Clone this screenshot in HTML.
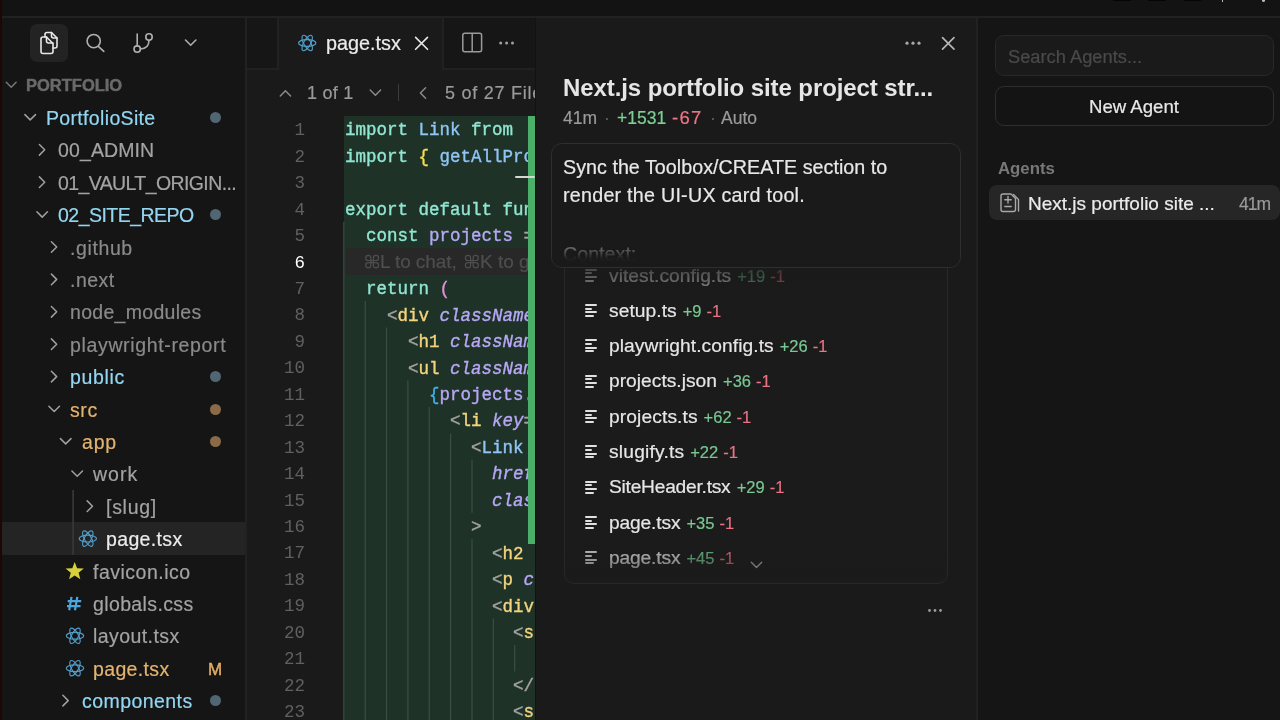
<!DOCTYPE html>
<html><head><meta charset="utf-8"><style>
*{margin:0;padding:0;box-sizing:border-box}
html,body{width:1280px;height:720px;overflow:hidden;background:#181818;font-family:"Liberation Sans",sans-serif}
.a{position:absolute}
.t{position:absolute;white-space:nowrap;line-height:1;will-change:transform;padding:6px 0;margin-top:-6px;-webkit-text-stroke:0.2px currentColor}
.m{font-family:"Liberation Mono",monospace;-webkit-text-stroke:0.35px currentColor}
svg.ov{position:absolute;left:0;top:0;overflow:visible}
</style></head><body>
<div class="a" style="left:0;top:0;width:1280px;height:16px;background:#131313"></div>
<div class="a" style="left:0;top:16px;width:1280px;height:2px;background:#212121"></div>
<div class="a" style="left:0;top:18px;width:245px;height:702px;background:#151515"></div>
<div class="a" style="left:0;top:0;width:2px;height:720px;background:#1c0606"></div>
<div class="a" style="left:1113px;top:0;width:18px;height:1px;background:#050505"></div>
<div class="a" style="left:1148px;top:0;width:18px;height:1px;background:#050505"></div>
<div class="a" style="left:1184px;top:0;width:17px;height:1px;background:#050505"></div>
<div class="a" style="left:1221.5px;top:0;width:1.5px;height:1.5px;background:#bbb"></div>
<div class="a" style="left:1262px;top:0;width:2.5px;height:1.5px;border-radius:0 0 2px 2px;background:#bbb"></div>
<div class="a" style="left:30px;top:24px;width:38px;height:38px;border-radius:7px;background:#232323"></div>
<div class="t" style="-webkit-text-stroke:0;left:25.5px;top:77.03px;font-size:16.5px;color:#6a6a6a;font-weight:700;letter-spacing:-0.006px;-webkit-text-stroke:0.45px currentColor;">PORTFOLIO</div>
<div class="a" style="left:2px;top:522.4px;width:243px;height:32.4px;background:#242424"></div>
<div class="t" style="left:46px;top:108.99px;font-size:19.5px;color:#93d6f2;font-weight:400;letter-spacing:0.338px;">PortfolioSite</div>
<div class="a" style="left:209.5px;top:111.9px;width:11px;height:11px;border-radius:50%;background:#506773"></div>
<div class="t" style="left:58px;top:141.39px;font-size:19.5px;color:#a3a3a3;font-weight:400;letter-spacing:0.118px;">00_ADMIN</div>
<div class="t" style="left:58px;top:173.79px;font-size:19.5px;color:#a3a3a3;font-weight:400;letter-spacing:-0.602px;">01_VAULT_ORIGIN...</div>
<div class="t" style="left:58px;top:206.19px;font-size:19.5px;color:#93d6f2;font-weight:400;letter-spacing:-0.526px;">02_SITE_REPO</div>
<div class="a" style="left:209.5px;top:209.1px;width:11px;height:11px;border-radius:50%;background:#506773"></div>
<div class="t" style="left:70px;top:238.59px;font-size:19.5px;color:#8a8a8a;font-weight:400;letter-spacing:0.606px;">.github</div>
<div class="t" style="left:70px;top:270.99px;font-size:19.5px;color:#8a8a8a;font-weight:400;letter-spacing:0.480px;">.next</div>
<div class="t" style="left:70px;top:303.39px;font-size:19.5px;color:#8a8a8a;font-weight:400;letter-spacing:0.297px;">node_modules</div>
<div class="t" style="left:70px;top:335.79px;font-size:19.5px;color:#8a8a8a;font-weight:400;letter-spacing:0.654px;">playwright-report</div>
<div class="t" style="left:70px;top:368.19px;font-size:19.5px;color:#93d6f2;font-weight:400;letter-spacing:0.649px;">public</div>
<div class="a" style="left:209.5px;top:371.1px;width:11px;height:11px;border-radius:50%;background:#506773"></div>
<div class="t" style="left:70px;top:400.59px;font-size:19.5px;color:#e3b46e;font-weight:400;letter-spacing:0.600px;">src</div>
<div class="a" style="left:209.5px;top:403.5px;width:11px;height:11px;border-radius:50%;background:#8b6b47"></div>
<div class="t" style="left:81.5px;top:432.99px;font-size:19.5px;color:#e3b46e;font-weight:400;letter-spacing:0.827px;">app</div>
<div class="a" style="left:209.5px;top:435.9px;width:11px;height:11px;border-radius:50%;background:#8b6b47"></div>
<div class="t" style="left:93px;top:465.39px;font-size:19.5px;color:#a3a3a3;font-weight:400;letter-spacing:1.009px;">work</div>
<div class="t" style="left:105.8px;top:497.79px;font-size:19.5px;color:#a3a3a3;font-weight:400;letter-spacing:0.718px;">[slug]</div>
<div class="t" style="left:105.8px;top:530.19px;font-size:19.5px;color:#ececec;font-weight:400;letter-spacing:0.354px;">page.tsx</div>
<div class="t" style="left:93px;top:562.59px;font-size:19.5px;color:#a3a3a3;font-weight:400;letter-spacing:0.506px;">favicon.ico</div>
<div class="t" style="left:93px;top:594.99px;font-size:19.5px;color:#a3a3a3;font-weight:400;letter-spacing:0.373px;">globals.css</div>
<div class="t" style="left:93px;top:627.39px;font-size:19.5px;color:#a3a3a3;font-weight:400;letter-spacing:0.425px;">layout.tsx</div>
<div class="t" style="left:93px;top:659.79px;font-size:19.5px;color:#e3b46e;font-weight:400;letter-spacing:0.354px;">page.tsx</div>
<div class="t" style="left:207.6px;top:660.81px;font-size:17px;color:#e4ad64;font-weight:400;-webkit-text-stroke:0.45px currentColor;">M</div>
<div class="t" style="left:81.5px;top:692.19px;font-size:19.5px;color:#93d6f2;font-weight:400;letter-spacing:0.441px;">components</div>
<div class="a" style="left:209.5px;top:695.1px;width:11px;height:11px;border-radius:50%;background:#506773"></div>
<div class="a" style="left:246px;top:18px;width:289px;height:702px;background:#1a1a1a"></div>
<div class="a" style="left:245px;top:18px;width:2px;height:702px;background:#212121"></div>
<div class="a" style="left:247px;top:18px;width:32px;height:51.5px;background:#161616;border-right:2px solid #212121;border-bottom:2px solid #212121"></div>
<div class="a" style="left:442px;top:18px;width:93px;height:51.5px;background:#161616;border-left:2px solid #212121;border-bottom:2px solid #212121"></div>
<div class="t" style="left:325.5px;top:33.54px;font-size:19.8px;color:#ececec;font-weight:400;">page.tsx</div>
<div class="t" style="left:306.5px;top:84.06px;font-size:18px;color:#9a9a9a;font-weight:400;letter-spacing:0.231px;">1 of 1</div>
<div class="a" style="left:398.2px;top:84px;width:1.2px;height:17px;background:#3c3c3c"></div>
<div class="a" style="left:246px;top:69px;width:289px;height:47px;overflow:hidden">
<div class="t" style="left:198.5px;top:15.06px;font-size:18px;color:#9a9a9a;font-weight:400;letter-spacing:0.75px;">5 of 27 Files</div>
</div>
<div class="t m" style="-webkit-text-stroke:0;left:255px;width:50px;text-align:right;top:122.27px;font-size:17.5px;line-height:17.5px;color:#606060">1</div>
<div class="t m" style="-webkit-text-stroke:0;left:255px;width:50px;text-align:right;top:148.72px;font-size:17.5px;line-height:17.5px;color:#606060">2</div>
<div class="t m" style="-webkit-text-stroke:0;left:255px;width:50px;text-align:right;top:175.18px;font-size:17.5px;line-height:17.5px;color:#606060">3</div>
<div class="t m" style="-webkit-text-stroke:0;left:255px;width:50px;text-align:right;top:201.62px;font-size:17.5px;line-height:17.5px;color:#606060">4</div>
<div class="t m" style="-webkit-text-stroke:0;left:255px;width:50px;text-align:right;top:228.08px;font-size:17.5px;line-height:17.5px;color:#606060">5</div>
<div class="t m" style="-webkit-text-stroke:0;left:255px;width:50px;text-align:right;top:254.53px;font-size:17.5px;line-height:17.5px;color:#ffffff">6</div>
<div class="t m" style="-webkit-text-stroke:0;left:255px;width:50px;text-align:right;top:280.98px;font-size:17.5px;line-height:17.5px;color:#606060">7</div>
<div class="t m" style="-webkit-text-stroke:0;left:255px;width:50px;text-align:right;top:307.43px;font-size:17.5px;line-height:17.5px;color:#606060">8</div>
<div class="t m" style="-webkit-text-stroke:0;left:255px;width:50px;text-align:right;top:333.88px;font-size:17.5px;line-height:17.5px;color:#606060">9</div>
<div class="t m" style="-webkit-text-stroke:0;left:255px;width:50px;text-align:right;top:360.32px;font-size:17.5px;line-height:17.5px;color:#606060">10</div>
<div class="t m" style="-webkit-text-stroke:0;left:255px;width:50px;text-align:right;top:386.78px;font-size:17.5px;line-height:17.5px;color:#606060">11</div>
<div class="t m" style="-webkit-text-stroke:0;left:255px;width:50px;text-align:right;top:413.23px;font-size:17.5px;line-height:17.5px;color:#606060">12</div>
<div class="t m" style="-webkit-text-stroke:0;left:255px;width:50px;text-align:right;top:439.68px;font-size:17.5px;line-height:17.5px;color:#606060">13</div>
<div class="t m" style="-webkit-text-stroke:0;left:255px;width:50px;text-align:right;top:466.12px;font-size:17.5px;line-height:17.5px;color:#606060">14</div>
<div class="t m" style="-webkit-text-stroke:0;left:255px;width:50px;text-align:right;top:492.58px;font-size:17.5px;line-height:17.5px;color:#606060">15</div>
<div class="t m" style="-webkit-text-stroke:0;left:255px;width:50px;text-align:right;top:519.02px;font-size:17.5px;line-height:17.5px;color:#606060">16</div>
<div class="t m" style="-webkit-text-stroke:0;left:255px;width:50px;text-align:right;top:545.48px;font-size:17.5px;line-height:17.5px;color:#606060">17</div>
<div class="t m" style="-webkit-text-stroke:0;left:255px;width:50px;text-align:right;top:571.92px;font-size:17.5px;line-height:17.5px;color:#606060">18</div>
<div class="t m" style="-webkit-text-stroke:0;left:255px;width:50px;text-align:right;top:598.37px;font-size:17.5px;line-height:17.5px;color:#606060">19</div>
<div class="t m" style="-webkit-text-stroke:0;left:255px;width:50px;text-align:right;top:624.82px;font-size:17.5px;line-height:17.5px;color:#606060">20</div>
<div class="t m" style="-webkit-text-stroke:0;left:255px;width:50px;text-align:right;top:651.27px;font-size:17.5px;line-height:17.5px;color:#606060">21</div>
<div class="t m" style="-webkit-text-stroke:0;left:255px;width:50px;text-align:right;top:677.72px;font-size:17.5px;line-height:17.5px;color:#606060">22</div>
<div class="t m" style="-webkit-text-stroke:0;left:255px;width:50px;text-align:right;top:704.17px;font-size:17.5px;line-height:17.5px;color:#606060">23</div>
<div class="a" style="left:343.5px;top:116px;width:191.5px;height:604px;background:#1f3227"></div>
<div class="a" style="left:528px;top:116px;width:7px;height:428px;background:#4aaf68"></div>
<div class="a" style="left:346px;top:248.25px;width:182px;height:26.4px;background:#282828"></div>
<div class="a" style="left:344px;top:116px;width:191px;height:604px;overflow:hidden">
<div class="t m" style="left:0.5px;top:6.47px;font-size:17.5px;line-height:17.5px;white-space:pre"><span style="color:#90e6d2;">import </span><span style="color:#8fc5f5;">Link </span><span style="color:#90e6d2;">from</span></div>
<div class="t m" style="left:0.5px;top:32.92px;font-size:17.5px;line-height:17.5px;white-space:pre"><span style="color:#90e6d2;">import </span><span style="color:#f5e04a;">{ </span><span style="color:#8fc5f5;">getAllProjects</span></div>
<div class="t m" style="left:0.5px;top:85.82px;font-size:17.5px;line-height:17.5px;white-space:pre"><span style="color:#90e6d2;">export default function</span></div>
<div class="t m" style="left:0.5px;top:112.28px;font-size:17.5px;line-height:17.5px;white-space:pre"><span style="color:#90e6d2;">  const </span><span style="color:#b7a8f6;">projects </span><span style="color:#a5a5a5;">= </span></div>
<div class="t m" style="left:0.5px;top:165.17px;font-size:17.5px;line-height:17.5px;white-space:pre"><span style="color:#90e6d2;">  return </span><span style="color:#e78ed8;">(</span></div>
<div class="t m" style="left:0.5px;top:191.62px;font-size:17.5px;line-height:17.5px;white-space:pre"><span style="color:#a5a5a5;">    &lt;</span><span style="color:#f4d47e;">div </span><span style="color:#b7a8f6;font-style:italic;">className</span></div>
<div class="t m" style="left:0.5px;top:218.08px;font-size:17.5px;line-height:17.5px;white-space:pre"><span style="color:#a5a5a5;">      &lt;</span><span style="color:#f4d47e;">h1 </span><span style="color:#b7a8f6;font-style:italic;">className</span></div>
<div class="t m" style="left:0.5px;top:244.52px;font-size:17.5px;line-height:17.5px;white-space:pre"><span style="color:#a5a5a5;">      &lt;</span><span style="color:#f4d47e;">ul </span><span style="color:#b7a8f6;font-style:italic;">className</span></div>
<div class="t m" style="left:0.5px;top:270.98px;font-size:17.5px;line-height:17.5px;white-space:pre"><span style="color:#3fb4ef;">        {</span><span style="color:#b7a8f6;">projects</span><span style="color:#a5a5a5;">.</span></div>
<div class="t m" style="left:0.5px;top:297.43px;font-size:17.5px;line-height:17.5px;white-space:pre"><span style="color:#a5a5a5;">          &lt;</span><span style="color:#f4d47e;">li </span><span style="color:#b7a8f6;font-style:italic;">key</span><span style="color:#a5a5a5;">=</span></div>
<div class="t m" style="left:0.5px;top:323.88px;font-size:17.5px;line-height:17.5px;white-space:pre"><span style="color:#a5a5a5;">            &lt;</span><span style="color:#8fc5f5;">Link </span></div>
<div class="t m" style="left:0.5px;top:350.32px;font-size:17.5px;line-height:17.5px;white-space:pre"><span style="color:#b7a8f6;font-style:italic;">              href</span></div>
<div class="t m" style="left:0.5px;top:376.78px;font-size:17.5px;line-height:17.5px;white-space:pre"><span style="color:#b7a8f6;font-style:italic;">              className</span></div>
<div class="t m" style="left:0.5px;top:403.23px;font-size:17.5px;line-height:17.5px;white-space:pre"><span style="color:#a5a5a5;">            &gt;</span></div>
<div class="t m" style="left:0.5px;top:429.68px;font-size:17.5px;line-height:17.5px;white-space:pre"><span style="color:#a5a5a5;">              &lt;</span><span style="color:#f4d47e;">h2 </span></div>
<div class="t m" style="left:0.5px;top:456.12px;font-size:17.5px;line-height:17.5px;white-space:pre"><span style="color:#a5a5a5;">              &lt;</span><span style="color:#f4d47e;">p </span><span style="color:#b7a8f6;font-style:italic;">className</span></div>
<div class="t m" style="left:0.5px;top:482.57px;font-size:17.5px;line-height:17.5px;white-space:pre"><span style="color:#a5a5a5;">              &lt;</span><span style="color:#f4d47e;">div</span></div>
<div class="t m" style="left:0.5px;top:509.02px;font-size:17.5px;line-height:17.5px;white-space:pre"><span style="color:#a5a5a5;">                &lt;</span><span style="color:#f4d47e;">span</span></div>
<div class="t m" style="left:0.5px;top:561.92px;font-size:17.5px;line-height:17.5px;white-space:pre"><span style="color:#a5a5a5;">                &lt;/</span></div>
<div class="t m" style="left:0.5px;top:588.38px;font-size:17.5px;line-height:17.5px;white-space:pre"><span style="color:#a5a5a5;">                &lt;</span><span style="color:#f4d47e;">span</span></div>
<div class="t" style="left:36.30000000000001px;top:136.22px;font-size:19px;color:#4e4e4e;font-weight:400;letter-spacing:-0.085px;">L to chat,</div>
<div class="t" style="left:136.2px;top:136.22px;font-size:19px;color:#4e4e4e;font-weight:400;">K to generate</div>
</div>
<div class="a" style="left:528px;top:116px;width:7px;height:428px;background:#4aaf68"></div>
<div class="a" style="left:514.5px;top:176.2px;width:20.5px;height:2.3px;border-radius:1px;background:#d6d6d6"></div>
<div class="a" style="left:535px;top:18px;width:442px;height:702px;background:#1a1a1a"></div>
<div class="a" style="left:535px;top:18px;width:1px;height:702px;background:#121212"></div>
<div class="t" style="-webkit-text-stroke:0;left:563px;top:75.68px;font-size:24px;color:#e6e6e6;font-weight:700;letter-spacing:-0.089px;">Next.js portfolio site project str...</div>
<div class="t" style="left:563px;top:110.19px;font-size:17.5px;color:#9a9a9a;font-weight:400;">41m</div>
<div class="t" style="left:603.5px;top:110.19px;font-size:17.5px;color:#5f5f5f;font-weight:400;">·</div>
<div class="t" style="left:617px;top:110.19px;font-size:17.5px;color:#7fcf97;font-weight:400;">+1531</div>
<div class="t" style="left:671.5px;top:109.34px;font-size:18.5px;color:#ee7587;font-weight:400;letter-spacing:1.225px;">-67</div>
<div class="t" style="left:709.5px;top:110.19px;font-size:17.5px;color:#5f5f5f;font-weight:400;">·</div>
<div class="t" style="left:721px;top:110.19px;font-size:17.5px;color:#9a9a9a;font-weight:400;">Auto</div>
<div class="a" style="left:564px;top:200px;width:384px;height:384px;border:1.5px solid #282828;border-radius:10px;background:#1b1b1b"></div>
<div class="a" style="left:0;top:0;width:1280px;height:720px;opacity:0.85">
<div class="a" style="left:585px;top:268.7px;width:12px;height:2px;border-radius:1px;background:#e0e0e0"></div>
<div class="a" style="left:585px;top:272.4px;width:7px;height:2px;border-radius:1px;background:#e0e0e0"></div>
<div class="a" style="left:585px;top:276.1px;width:12px;height:2px;border-radius:1px;background:#e0e0e0"></div>
<div class="a" style="left:585px;top:279.8px;width:9px;height:2px;border-radius:1px;background:#e0e0e0"></div>
<div class="t fn" style="left:609px;top:265.55px;font-size:19.2px;color:#e6e6e6"><span style="letter-spacing:0.041px;margin-right:-0.041px">vitest.config.ts</span><span style="font-size:16.5px;color:#79c892;margin-left:6px">+19</span><span style="font-size:16.5px;color:#ec7284;margin-left:5px">-1</span></div>
</div>
<div class="a" style="left:0;top:0;width:1280px;height:720px;opacity:1.0">
<div class="a" style="left:585px;top:304.0px;width:12px;height:2px;border-radius:1px;background:#e0e0e0"></div>
<div class="a" style="left:585px;top:307.7px;width:7px;height:2px;border-radius:1px;background:#e0e0e0"></div>
<div class="a" style="left:585px;top:311.4px;width:12px;height:2px;border-radius:1px;background:#e0e0e0"></div>
<div class="a" style="left:585px;top:315.1px;width:9px;height:2px;border-radius:1px;background:#e0e0e0"></div>
<div class="t fn" style="left:609px;top:300.85px;font-size:19.2px;color:#e6e6e6"><span style="letter-spacing:0.071px;margin-right:-0.071px">setup.ts</span><span style="font-size:16.5px;color:#79c892;margin-left:6px">+9</span><span style="font-size:16.5px;color:#ec7284;margin-left:5px">-1</span></div>
</div>
<div class="a" style="left:0;top:0;width:1280px;height:720px;opacity:1.0">
<div class="a" style="left:585px;top:339.3px;width:12px;height:2px;border-radius:1px;background:#e0e0e0"></div>
<div class="a" style="left:585px;top:343.0px;width:7px;height:2px;border-radius:1px;background:#e0e0e0"></div>
<div class="a" style="left:585px;top:346.7px;width:12px;height:2px;border-radius:1px;background:#e0e0e0"></div>
<div class="a" style="left:585px;top:350.4px;width:9px;height:2px;border-radius:1px;background:#e0e0e0"></div>
<div class="t fn" style="left:609px;top:336.15px;font-size:19.2px;color:#e6e6e6"><span style="letter-spacing:0.080px;margin-right:-0.080px">playwright.config.ts</span><span style="font-size:16.5px;color:#79c892;margin-left:6px">+26</span><span style="font-size:16.5px;color:#ec7284;margin-left:5px">-1</span></div>
</div>
<div class="a" style="left:0;top:0;width:1280px;height:720px;opacity:1.0">
<div class="a" style="left:585px;top:374.6px;width:12px;height:2px;border-radius:1px;background:#e0e0e0"></div>
<div class="a" style="left:585px;top:378.3px;width:7px;height:2px;border-radius:1px;background:#e0e0e0"></div>
<div class="a" style="left:585px;top:382.0px;width:12px;height:2px;border-radius:1px;background:#e0e0e0"></div>
<div class="a" style="left:585px;top:385.7px;width:9px;height:2px;border-radius:1px;background:#e0e0e0"></div>
<div class="t fn" style="left:609px;top:371.45px;font-size:19.2px;color:#e6e6e6"><span style="letter-spacing:0.023px;margin-right:-0.023px">projects.json</span><span style="font-size:16.5px;color:#79c892;margin-left:6px">+36</span><span style="font-size:16.5px;color:#ec7284;margin-left:5px">-1</span></div>
</div>
<div class="a" style="left:0;top:0;width:1280px;height:720px;opacity:1.0">
<div class="a" style="left:585px;top:409.9px;width:12px;height:2px;border-radius:1px;background:#e0e0e0"></div>
<div class="a" style="left:585px;top:413.6px;width:7px;height:2px;border-radius:1px;background:#e0e0e0"></div>
<div class="a" style="left:585px;top:417.3px;width:12px;height:2px;border-radius:1px;background:#e0e0e0"></div>
<div class="a" style="left:585px;top:421.0px;width:9px;height:2px;border-radius:1px;background:#e0e0e0"></div>
<div class="t fn" style="left:609px;top:406.75px;font-size:19.2px;color:#e6e6e6"><span style="letter-spacing:0.115px;margin-right:-0.115px">projects.ts</span><span style="font-size:16.5px;color:#79c892;margin-left:6px">+62</span><span style="font-size:16.5px;color:#ec7284;margin-left:5px">-1</span></div>
</div>
<div class="a" style="left:0;top:0;width:1280px;height:720px;opacity:1.0">
<div class="a" style="left:585px;top:445.2px;width:12px;height:2px;border-radius:1px;background:#e0e0e0"></div>
<div class="a" style="left:585px;top:448.9px;width:7px;height:2px;border-radius:1px;background:#e0e0e0"></div>
<div class="a" style="left:585px;top:452.6px;width:12px;height:2px;border-radius:1px;background:#e0e0e0"></div>
<div class="a" style="left:585px;top:456.3px;width:9px;height:2px;border-radius:1px;background:#e0e0e0"></div>
<div class="t fn" style="left:609px;top:442.05px;font-size:19.2px;color:#e6e6e6"><span style="letter-spacing:0.220px;margin-right:-0.220px">slugify.ts</span><span style="font-size:16.5px;color:#79c892;margin-left:6px">+22</span><span style="font-size:16.5px;color:#ec7284;margin-left:5px">-1</span></div>
</div>
<div class="a" style="left:0;top:0;width:1280px;height:720px;opacity:1.0">
<div class="a" style="left:585px;top:480.5px;width:12px;height:2px;border-radius:1px;background:#e0e0e0"></div>
<div class="a" style="left:585px;top:484.2px;width:7px;height:2px;border-radius:1px;background:#e0e0e0"></div>
<div class="a" style="left:585px;top:487.9px;width:12px;height:2px;border-radius:1px;background:#e0e0e0"></div>
<div class="a" style="left:585px;top:491.6px;width:9px;height:2px;border-radius:1px;background:#e0e0e0"></div>
<div class="t fn" style="left:609px;top:477.35px;font-size:19.2px;color:#e6e6e6"><span style="letter-spacing:-0.238px;margin-right:0.238px">SiteHeader.tsx</span><span style="font-size:16.5px;color:#79c892;margin-left:6px">+29</span><span style="font-size:16.5px;color:#ec7284;margin-left:5px">-1</span></div>
</div>
<div class="a" style="left:0;top:0;width:1280px;height:720px;opacity:1.0">
<div class="a" style="left:585px;top:515.8px;width:12px;height:2px;border-radius:1px;background:#e0e0e0"></div>
<div class="a" style="left:585px;top:519.5px;width:7px;height:2px;border-radius:1px;background:#e0e0e0"></div>
<div class="a" style="left:585px;top:523.2px;width:12px;height:2px;border-radius:1px;background:#e0e0e0"></div>
<div class="a" style="left:585px;top:526.9px;width:9px;height:2px;border-radius:1px;background:#e0e0e0"></div>
<div class="t fn" style="left:609px;top:512.65px;font-size:19.2px;color:#e6e6e6"><span style="letter-spacing:-0.150px;margin-right:0.150px">page.tsx</span><span style="font-size:16.5px;color:#79c892;margin-left:6px">+35</span><span style="font-size:16.5px;color:#ec7284;margin-left:5px">-1</span></div>
</div>
<div class="a" style="left:0;top:0;width:1280px;height:720px;opacity:0.9">
<div class="a" style="left:585px;top:551.1px;width:12px;height:2px;border-radius:1px;background:#e0e0e0"></div>
<div class="a" style="left:585px;top:554.8px;width:7px;height:2px;border-radius:1px;background:#e0e0e0"></div>
<div class="a" style="left:585px;top:558.5px;width:12px;height:2px;border-radius:1px;background:#e0e0e0"></div>
<div class="a" style="left:585px;top:562.2px;width:9px;height:2px;border-radius:1px;background:#e0e0e0"></div>
<div class="t fn" style="left:609px;top:547.95px;font-size:19.2px;color:#e6e6e6"><span style="letter-spacing:-0.150px;margin-right:0.150px">page.tsx</span><span style="font-size:16.5px;color:#79c892;margin-left:6px">+45</span><span style="font-size:16.5px;color:#ec7284;margin-left:5px">-1</span></div>
</div>
<div class="a" style="left:566px;top:266px;width:380px;height:26px;will-change:transform;background:linear-gradient(to bottom, rgba(27,27,27,0.8), rgba(27,27,27,0.35))"></div>
<div class="a" style="left:566px;top:544px;width:380px;height:34px;will-change:transform;background:linear-gradient(to bottom, rgba(27,27,27,0.05), rgba(27,27,27,0.6))"></div>
<div class="a" style="left:550.5px;top:142.5px;width:410.5px;height:125.5px;border:1.5px solid #2e2e2e;border-radius:11px;background:#1a1a1a;overflow:hidden">
<div class="t" style="left:11.5px;top:14.32px;font-size:19.7px;color:#e8e8e8;font-weight:400;letter-spacing:0.031px;">Sync the Toolbox/CREATE section to</div>
<div class="t" style="left:11.5px;top:42.82px;font-size:19.7px;color:#e8e8e8;font-weight:400;letter-spacing:0.247px;">render the UI-UX card tool.</div>
<div class="t" style="left:11.5px;top:101.32px;font-size:19.7px;color:#a8a8a8;font-weight:400;">Context:</div>
<div class="a" style="left:0;top:96px;width:408px;height:30px;will-change:transform;background:linear-gradient(to bottom, rgba(26,26,26,0.3) 0%, rgba(26,26,26,0.5) 30%, rgba(26,26,26,0.97) 62%, rgba(26,26,26,1) 100%)"></div>
</div>
<div class="a" style="left:976px;top:18px;width:2px;height:702px;background:#212121"></div>
<div class="a" style="left:978px;top:18px;width:302px;height:702px;background:#151515"></div>
<div class="a" style="left:995px;top:35px;width:278.5px;height:40.5px;border:1.5px solid #282828;border-radius:9px;background:#1a1a1a"></div>
<div class="t" style="left:1008px;top:47.51px;font-size:18.3px;color:#4a4a4a;font-weight:400;">Search Agents...</div>
<div class="a" style="left:995px;top:85.5px;width:278.5px;height:40.5px;border:1.5px solid #2e2e2e;border-radius:9px;background:#141414"></div>
<div class="t" style="left:1089px;top:97.76px;font-size:18.6px;color:#e8e8e8;font-weight:400;">New Agent</div>
<div class="t" style="left:997.5px;top:160.78px;font-size:16.8px;color:#787878;font-weight:700;-webkit-text-stroke:0;">Agents</div>
<div class="a" style="left:989px;top:185.3px;width:291px;height:35px;border-radius:8px;background:#262626"></div>
<div class="t" style="left:1028px;top:193.92px;font-size:19px;color:#ececec;font-weight:400;">Next.js portfolio site ...</div>
<div class="t" style="left:1239px;top:195.69px;font-size:17.5px;color:#9a9a9a;font-weight:400;letter-spacing:-0.923px;">41m</div>
<svg class="ov" width="1280" height="720" viewBox="0 0 1280 720"><g fill="none" stroke="#e8e8e8" stroke-width="1.6" stroke-linejoin="round" stroke-linecap="round"><path d="M41 39 Q41 37 43 37 H46.5 L53 43.5 V51.5 Q53 53.5 51 53.5 H43 Q41 53.5 41 51.5 Z"/><path d="M46.5 37 V41 Q46.5 43 48.5 43 H53"/><path d="M45 37 V34.5 Q45 32.5 47 32.5 H51.5 L57 38 V46 Q57 48 55 48 H53"/><path d="M51.5 32.5 V36 Q51.5 38 53.5 38 H57"/></g><g fill="none" stroke="#b0b0b0" stroke-width="1.6" stroke-linecap="round"><circle cx="93.7" cy="41.1" r="6.6"/><path d="M98.6 46.6 L103.8 51.4"/><path d="M137.2 34 V45.9"/><circle cx="137.2" cy="49.1" r="3.2"/><circle cx="149" cy="37" r="3.2"/><path d="M149 40.2 Q149 48.5 140.4 49"/><path d="M185.5 40 L190.7 45.2 L195.9 40"/></g><path d="M6.3 82.3 L11.2 87.2 L16.1 82.3" fill="none" stroke="#777" stroke-width="1.5" stroke-linecap="round" stroke-linejoin="round"/><path d="M73.1 490.0 V554.8" stroke="#3a3a3a" stroke-width="1.6"/><path d="M24.9 114.60000000000001 L30.2 119.9 L35.5 114.60000000000001" fill="none" stroke="#a0a0a0" stroke-width="1.5" stroke-linecap="round" stroke-linejoin="round"/><path d="M39.4 144.5 L44.7 149.8 L39.4 155.10000000000002" fill="none" stroke="#a0a0a0" stroke-width="1.5" stroke-linecap="round" stroke-linejoin="round"/><path d="M39.4 176.89999999999998 L44.7 182.2 L39.4 187.5" fill="none" stroke="#a0a0a0" stroke-width="1.5" stroke-linecap="round" stroke-linejoin="round"/><path d="M36.900000000000006 211.79999999999998 L42.2 217.1 L47.5 211.79999999999998" fill="none" stroke="#a0a0a0" stroke-width="1.5" stroke-linecap="round" stroke-linejoin="round"/><path d="M51.4 241.7 L56.7 247.0 L51.4 252.3" fill="none" stroke="#a0a0a0" stroke-width="1.5" stroke-linecap="round" stroke-linejoin="round"/><path d="M51.4 274.09999999999997 L56.7 279.4 L51.4 284.7" fill="none" stroke="#a0a0a0" stroke-width="1.5" stroke-linecap="round" stroke-linejoin="round"/><path d="M51.4 306.49999999999994 L56.7 311.79999999999995 L51.4 317.09999999999997" fill="none" stroke="#a0a0a0" stroke-width="1.5" stroke-linecap="round" stroke-linejoin="round"/><path d="M51.4 338.9 L56.7 344.2 L51.4 349.5" fill="none" stroke="#a0a0a0" stroke-width="1.5" stroke-linecap="round" stroke-linejoin="round"/><path d="M51.4 371.3 L56.7 376.6 L51.4 381.90000000000003" fill="none" stroke="#a0a0a0" stroke-width="1.5" stroke-linecap="round" stroke-linejoin="round"/><path d="M48.900000000000006 406.2 L54.2 411.5 L59.5 406.2" fill="none" stroke="#a0a0a0" stroke-width="1.5" stroke-linecap="round" stroke-linejoin="round"/><path d="M60.400000000000006 438.59999999999997 L65.7 443.9 L71.0 438.59999999999997" fill="none" stroke="#a0a0a0" stroke-width="1.5" stroke-linecap="round" stroke-linejoin="round"/><path d="M71.9 470.99999999999994 L77.2 476.29999999999995 L82.5 470.99999999999994" fill="none" stroke="#a0a0a0" stroke-width="1.5" stroke-linecap="round" stroke-linejoin="round"/><path d="M87.2 500.8999999999999 L92.5 506.19999999999993 L87.2 511.49999999999994" fill="none" stroke="#a0a0a0" stroke-width="1.5" stroke-linecap="round" stroke-linejoin="round"/><g fill="none" stroke="#529dc8" stroke-width="1.15"><ellipse cx="87.8" cy="538.6" rx="8.7" ry="3.4" transform="rotate(0 87.8 538.6)"/><ellipse cx="87.8" cy="538.6" rx="8.7" ry="3.4" transform="rotate(60 87.8 538.6)"/><ellipse cx="87.8" cy="538.6" rx="8.7" ry="3.4" transform="rotate(120 87.8 538.6)"/></g><polygon points="74.70,561.90 77.11,568.18 83.83,568.53 78.60,572.77 80.34,579.27 74.70,575.60 69.06,579.27 70.80,572.77 65.57,568.53 72.29,568.18" fill="#d6d03c"/><path d="M71.5 596.9 L69.2 610.1999999999999 M77.3 596.9 L75 610.1999999999999 M67.7 601.1 H81.2 M67 606.1 H80.5" stroke="#4aa6de" stroke-width="2.2"/><g fill="none" stroke="#529dc8" stroke-width="1.15"><ellipse cx="75" cy="635.8" rx="8.7" ry="3.4" transform="rotate(0 75 635.8)"/><ellipse cx="75" cy="635.8" rx="8.7" ry="3.4" transform="rotate(60 75 635.8)"/><ellipse cx="75" cy="635.8" rx="8.7" ry="3.4" transform="rotate(120 75 635.8)"/></g><g fill="none" stroke="#529dc8" stroke-width="1.15"><ellipse cx="75" cy="668.1999999999999" rx="8.7" ry="3.4" transform="rotate(0 75 668.1999999999999)"/><ellipse cx="75" cy="668.1999999999999" rx="8.7" ry="3.4" transform="rotate(60 75 668.1999999999999)"/><ellipse cx="75" cy="668.1999999999999" rx="8.7" ry="3.4" transform="rotate(120 75 668.1999999999999)"/></g><path d="M62.9 695.3 L68.2 700.5999999999999 L62.9 705.8999999999999" fill="none" stroke="#a0a0a0" stroke-width="1.5" stroke-linecap="round" stroke-linejoin="round"/><g fill="none" stroke="#529dc8" stroke-width="1.15"><ellipse cx="307.2" cy="43" rx="8.7" ry="3.4" transform="rotate(0 307.2 43)"/><ellipse cx="307.2" cy="43" rx="8.7" ry="3.4" transform="rotate(60 307.2 43)"/><ellipse cx="307.2" cy="43" rx="8.7" ry="3.4" transform="rotate(120 307.2 43)"/></g><path d="M415.6 37.4 L427.5 49.3 M427.5 37.4 L415.6 49.3" stroke="#e8e8e8" stroke-width="1.6" stroke-linecap="round"/><rect x="462.8" y="33.2" width="18.8" height="18.6" rx="2" fill="none" stroke="#9a9a9a" stroke-width="1.5"/><path d="M472.2 33.2 V51.8" stroke="#9a9a9a" stroke-width="1.5"/><circle cx="500.7" cy="43" r="1.5" fill="#a0a0a0"/><circle cx="506.6" cy="43" r="1.5" fill="#a0a0a0"/><circle cx="512.5" cy="43" r="1.5" fill="#a0a0a0"/><path d="M280.3 96 L285.4 90.8 L290.6 96" fill="none" stroke="#8a8a8a" stroke-width="1.5" stroke-linecap="round" stroke-linejoin="round"/><path d="M370.2 90 L375.4 95.2 L380.6 90" fill="none" stroke="#8a8a8a" stroke-width="1.5" stroke-linecap="round" stroke-linejoin="round"/><path d="M425.6 87.8 L420.4 93 L425.6 98.2" fill="none" stroke="#8a8a8a" stroke-width="1.5" stroke-linecap="round" stroke-linejoin="round"/><path d="M370.90 265.30 V257.90 A2.6 2.6 0 1 0 368.30 260.50 H376.00 A2.6 2.6 0 1 0 373.40 257.90 V265.30 A2.6 2.6 0 1 0 376.00 262.70 H368.30 A2.6 2.6 0 1 0 370.90 265.30 Z" fill="none" stroke="#4e4e4e" stroke-width="1.2"/><path d="M470.60 265.30 V257.90 A2.6 2.6 0 1 0 468.00 260.50 H475.70 A2.6 2.6 0 1 0 473.10 257.90 V265.30 A2.6 2.6 0 1 0 475.70 262.70 H468.00 A2.6 2.6 0 1 0 470.60 265.30 Z" fill="none" stroke="#4e4e4e" stroke-width="1.2"/><path d="M343.8 221.8 V724.4" stroke="#3d4d42" stroke-width="1.2"/><path d="M365.2 301.1 V724.4" stroke="#3d4d42" stroke-width="1.2"/><path d="M386.5 327.6 V724.4" stroke="#3d4d42" stroke-width="1.2"/><path d="M407.9 380.5 V724.4" stroke="#3d4d42" stroke-width="1.2"/><path d="M429.2 406.9 V724.4" stroke="#3d4d42" stroke-width="1.2"/><path d="M450.6 433.4 V724.4" stroke="#3d4d42" stroke-width="1.2"/><path d="M472.0 459.8 V512.8" stroke="#3d4d42" stroke-width="1.2"/><path d="M472.0 539.2 V724.4" stroke="#3d4d42" stroke-width="1.2"/><path d="M493.3 618.5 V724.4" stroke="#3d4d42" stroke-width="1.2"/><path d="M514.7 645.0 V671.5" stroke="#3d4d42" stroke-width="1.2"/><circle cx="907.0" cy="43.2" r="1.6" fill="#a8a8a8"/><circle cx="913.0" cy="43.2" r="1.6" fill="#a8a8a8"/><circle cx="919.0" cy="43.2" r="1.6" fill="#a8a8a8"/><path d="M942.5 37.6 L954 49.1 M954 37.6 L942.5 49.1" stroke="#b8b8b8" stroke-width="1.6" stroke-linecap="round"/><path d="M751.3 562.3 L756.5 567.5 L761.7 562.3" fill="none" stroke="#777" stroke-width="1.4" stroke-linecap="round" stroke-linejoin="round"/><circle cx="929.5" cy="610.5" r="1.4" fill="#9a9a9a"/><circle cx="935.0" cy="610.5" r="1.4" fill="#9a9a9a"/><circle cx="940.5" cy="610.5" r="1.4" fill="#9a9a9a"/><g fill="none" stroke="#a8a8a8" stroke-width="1.4" stroke-linejoin="round" stroke-linecap="round"><path d="M1003 194 H1011 L1015.5 198.5 V209.5 Q1015.5 211.5 1013.5 211.5 H1003 Q1001 211.5 1001 209.5 V196 Q1001 194 1003 194 Z"/><path d="M1013.5 194.5 L1018.5 199.5 V211"/><path d="M1008 196.5 V203 M1004.8 199.8 H1011.2 M1004.8 206.5 H1011.2"/></g></svg>
</body></html>
